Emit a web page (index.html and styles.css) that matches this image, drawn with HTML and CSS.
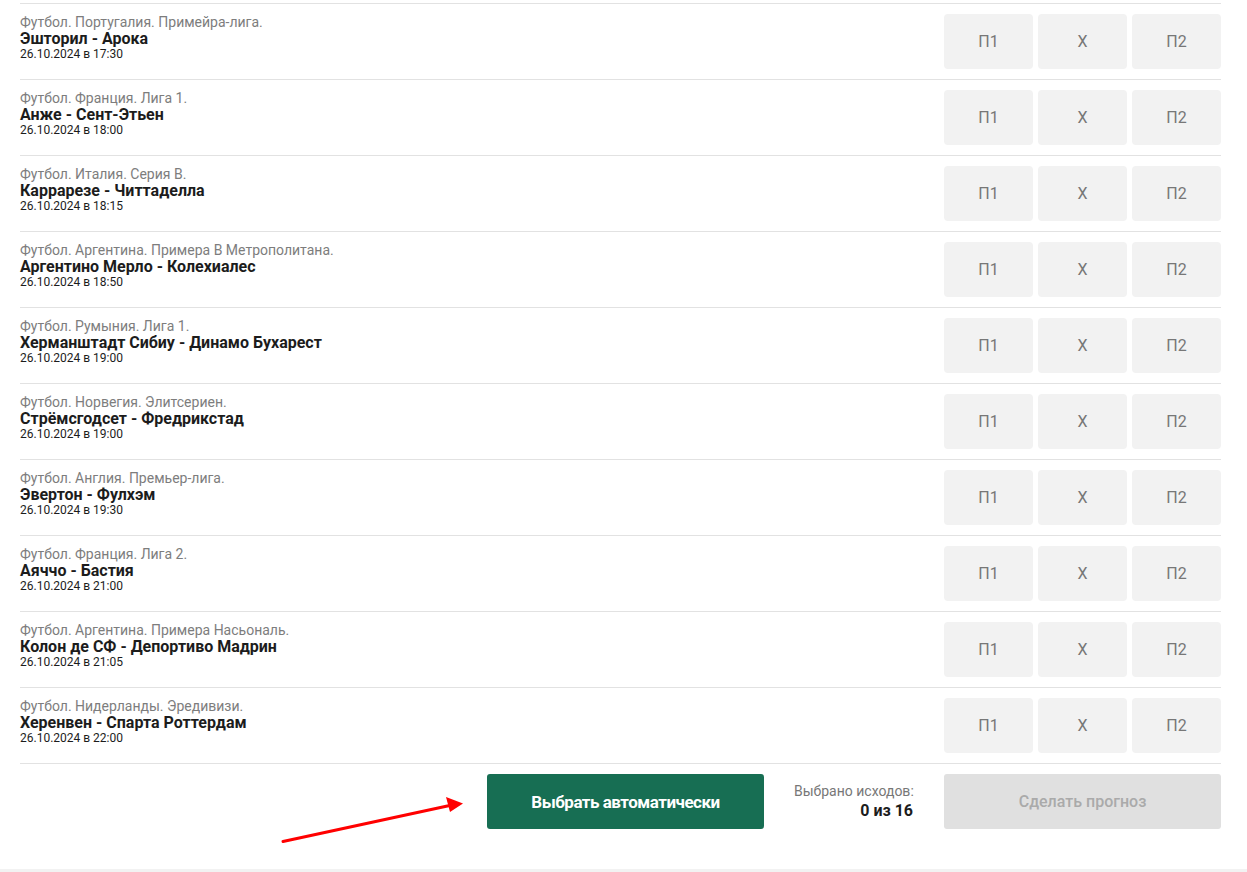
FILE: index.html
```html
<!DOCTYPE html>
<html lang="ru">
<head>
<meta charset="utf-8">
<title>Прогноз</title>
<link rel="stylesheet" href="styles.css">
</head>
<body>
<div class="page">
  <div class="list">
    <div class="row">
      <div class="info"><div class="cat">Футбол. Португалия. Примейра-лига.</div><div class="title">Эшторил - Арока</div><div class="date">26.10.2024 в 17:30</div></div>
      <div class="opts"><button class="opt">П1</button><button class="opt">X</button><button class="opt">П2</button></div>
    </div>
    <div class="row">
      <div class="info"><div class="cat">Футбол. Франция. Лига 1.</div><div class="title">Анже - Сент-Этьен</div><div class="date">26.10.2024 в 18:00</div></div>
      <div class="opts"><button class="opt">П1</button><button class="opt">X</button><button class="opt">П2</button></div>
    </div>
    <div class="row">
      <div class="info"><div class="cat">Футбол. Италия. Серия B.</div><div class="title">Каррарезе - Читтаделла</div><div class="date">26.10.2024 в 18:15</div></div>
      <div class="opts"><button class="opt">П1</button><button class="opt">X</button><button class="opt">П2</button></div>
    </div>
    <div class="row">
      <div class="info"><div class="cat">Футбол. Аргентина. Примера B Метрополитана.</div><div class="title">Аргентино Мерло - Колехиалес</div><div class="date">26.10.2024 в 18:50</div></div>
      <div class="opts"><button class="opt">П1</button><button class="opt">X</button><button class="opt">П2</button></div>
    </div>
    <div class="row">
      <div class="info"><div class="cat">Футбол. Румыния. Лига 1.</div><div class="title">Херманштадт Сибиу - Динамо Бухарест</div><div class="date">26.10.2024 в 19:00</div></div>
      <div class="opts"><button class="opt">П1</button><button class="opt">X</button><button class="opt">П2</button></div>
    </div>
    <div class="row">
      <div class="info"><div class="cat">Футбол. Норвегия. Элитсериен.</div><div class="title">Стрёмсгодсет - Фредрикстад</div><div class="date">26.10.2024 в 19:00</div></div>
      <div class="opts"><button class="opt">П1</button><button class="opt">X</button><button class="opt">П2</button></div>
    </div>
    <div class="row">
      <div class="info"><div class="cat">Футбол. Англия. Премьер-лига.</div><div class="title">Эвертон - Фулхэм</div><div class="date">26.10.2024 в 19:30</div></div>
      <div class="opts"><button class="opt">П1</button><button class="opt">X</button><button class="opt">П2</button></div>
    </div>
    <div class="row">
      <div class="info"><div class="cat">Футбол. Франция. Лига 2.</div><div class="title">Аяччо - Бастия</div><div class="date">26.10.2024 в 21:00</div></div>
      <div class="opts"><button class="opt">П1</button><button class="opt">X</button><button class="opt">П2</button></div>
    </div>
    <div class="row">
      <div class="info"><div class="cat">Футбол. Аргентина. Примера Насьональ.</div><div class="title">Колон де СФ - Депортиво Мадрин</div><div class="date">26.10.2024 в 21:05</div></div>
      <div class="opts"><button class="opt">П1</button><button class="opt">X</button><button class="opt">П2</button></div>
    </div>
    <div class="row">
      <div class="info"><div class="cat">Футбол. Нидерланды. Эредивизи.</div><div class="title">Херенвен - Спарта Роттердам</div><div class="date">26.10.2024 в 22:00</div></div>
      <div class="opts"><button class="opt">П1</button><button class="opt">X</button><button class="opt">П2</button></div>
    </div>
    <div class="footer">
      <button class="auto">Выбрать автоматически</button>
      <div class="count"><div class="count-label">Выбрано исходов:</div><div class="count-value">0 из 16</div></div>
      <button class="submit" disabled>Сделать прогноз</button>
    </div>
  </div>
  <div class="bottom-strip"></div>
  <svg class="arrow" width="200" height="60" viewBox="0 0 200 60">
    <line x1="3" y1="51.5" x2="172" y2="15" stroke="#ff0000" stroke-width="3" stroke-linecap="round"/>
    <polygon points="183,13.5 166,7 170,22" fill="#ff0000"/>
  </svg>
</div>
</body>
</html>
```
FILE: styles.css
```css
* { box-sizing: border-box; }
html, body { margin: 0; padding: 0; background: #fff; }
body { font-family: Roboto, "Noto Sans", Arial, sans-serif; color: #222; }
.page { position: relative; width: 1247px; height: 872px; overflow: hidden; }
.list { margin-left: 20px; width: 1201px; padding-top: 3px; }
.row {
  display: flex;
  align-items: flex-start;
  justify-content: space-between;
  border-top: 1px solid #e2e2e2;
  padding: 10px 0 10px 0;
}
.cat { font-size: 14px; line-height: 16px; color: #7d7d7d; }
.title { font-size: 16px; line-height: 17px; font-weight: 700; color: #1c1c1c; }
.date { font-size: 12px; line-height: 15px; color: #1c1c1c; }
.opts { display: flex; gap: 5px; }
.opt {
  width: 89px; height: 55px;
  border: 0; border-radius: 4px;
  background: #f2f2f2;
  color: #777;
  font-family: inherit; font-size: 16px;
  padding: 0;
}
.footer {
  display: flex;
  align-items: flex-start;
  justify-content: flex-end;
  border-top: 1px solid #e2e2e2;
  padding-top: 10px;
  height: 106px;
}
.auto {
  width: 277px; height: 55px;
  border: 0; border-radius: 3px;
  background: #176e53; color: #fff;
  font-family: inherit; font-size: 17px; font-weight: 700;
  letter-spacing: -0.5px;
  padding: 0;
}
.count { margin-left: 30px; width: 119px; text-align: right; padding-top: 8px; }
.count-label { font-size: 14px; line-height: 18px; color: #777; text-align: left; white-space: nowrap; }
.count-value { font-size: 16px; line-height: 20px; font-weight: 700; color: #1c1c1c; margin-top: 1px; }
.submit {
  margin-left: 31px;
  width: 277px; height: 55px;
  border: 0; border-radius: 3px;
  background: #e0e0e0; color: #aaa;
  font-family: inherit; font-size: 16px; font-weight: 500;
  padding: 0;
}
.bottom-strip { position: absolute; left: 0; right: 0; top: 869px; height: 3px; background: #f2f2f2; }
.arrow { position: absolute; left: 280px; top: 790px; }
```
